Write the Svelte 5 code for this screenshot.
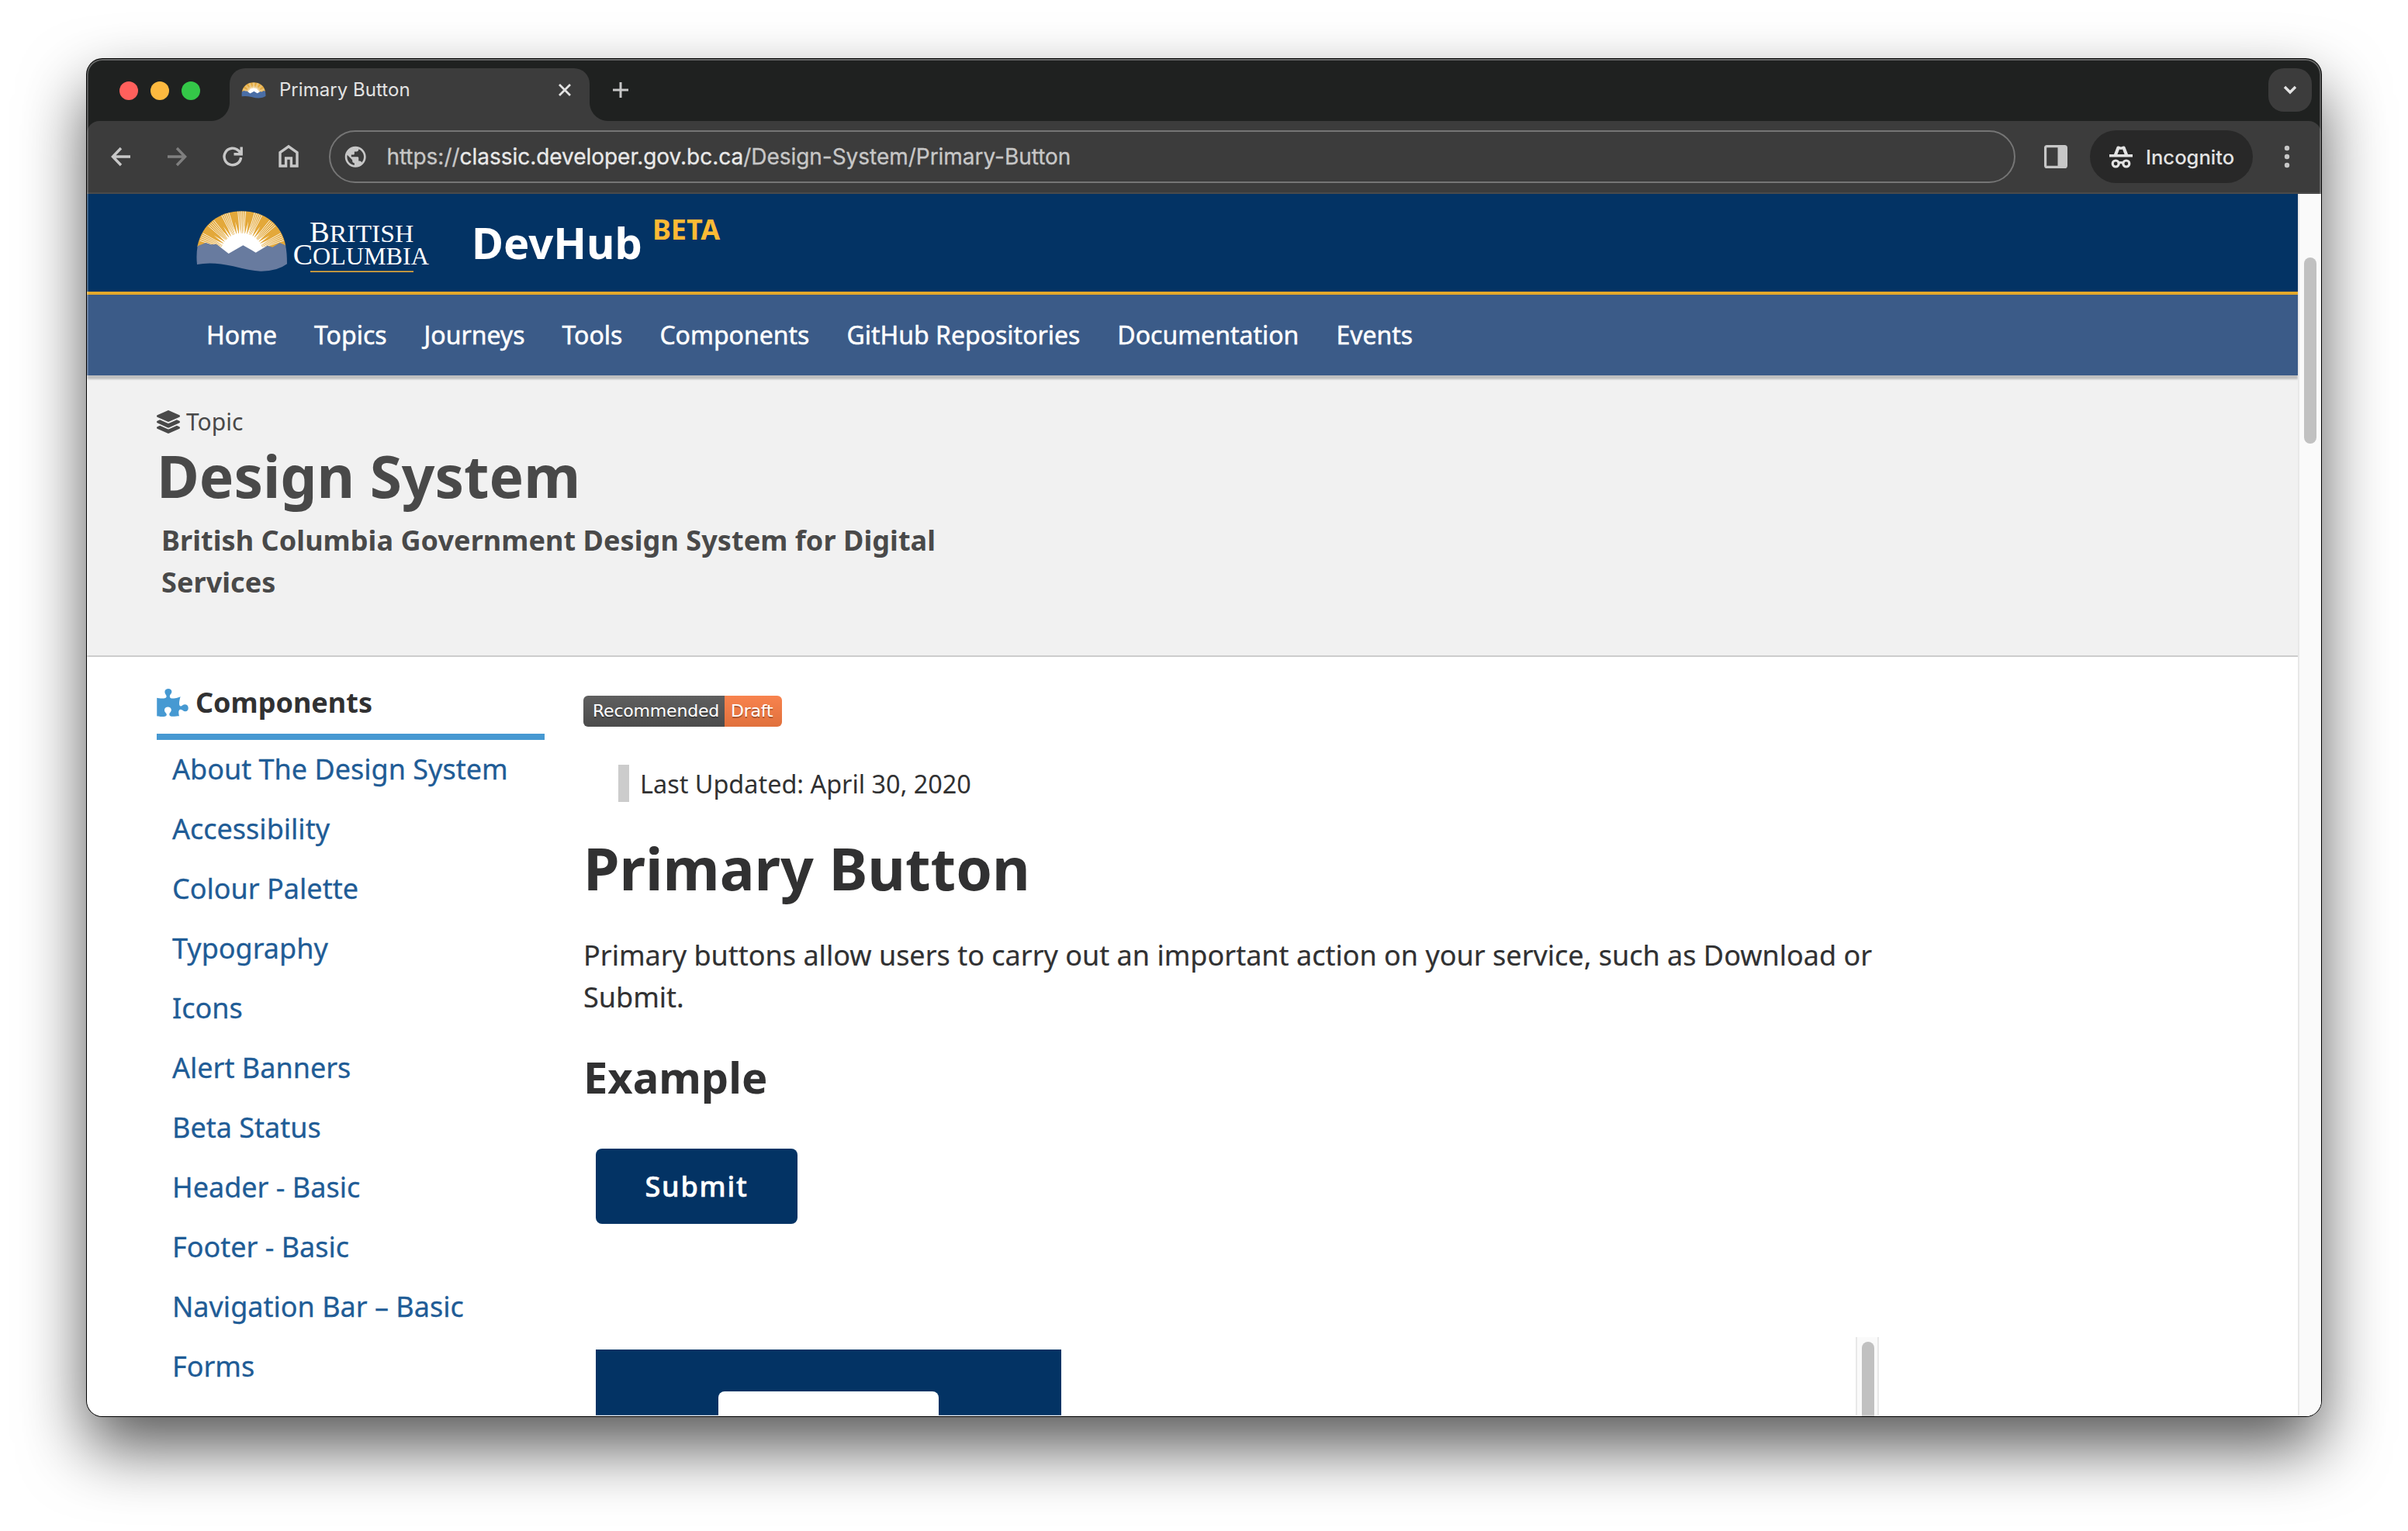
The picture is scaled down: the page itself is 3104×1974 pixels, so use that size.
<script lang="ts">
  const navItems = ['Home', 'Topics', 'Journeys', 'Tools', 'Components', 'GitHub Repositories', 'Documentation', 'Events'];
  const links = [
    'About The Design System', 'Accessibility', 'Colour Palette', 'Typography', 'Icons', 'Alert Banners',
    'Beta Status', 'Header - Basic', 'Footer - Basic', 'Navigation Bar – Basic', 'Forms'
  ];

  // Sun rays radiate from the centre of the dome
  const cx = 203;
  const cy = 200;
  const at = (deg: number, r: number) => {
    const a = (deg * Math.PI) / 180;
    return `${(cx + Math.sin(a) * r).toFixed(1)} ${(cy - Math.cos(a) * r).toFixed(1)}`;
  };
  const wedge = (deg: number, half: number, r0: number, r1: number) =>
    `M${at(deg - half, r0)}L${at(deg, r1)}L${at(deg + half, r0)}Z`;
  const bundles = [-66, -44, -22, 0, 22, 44, 66];
  const thin = bundles.flatMap((b) => [-5, -2.5, 0, 2.5, 5].map((d) => `M${at(b + d, 70)}L${at(b + d, 172)}`)).join('');
  const spikes = [-77, -55, -33, -11, 11, 33, 55, 77]
    .flatMap((b) => [wedge(b, 3, 76, 132), wedge(b - 5.5, 3, 76, 116), wedge(b + 5.5, 3, 76, 116)])
    .join('');
</script>

{#snippet sun(blue: string)}
  <path d="M31 168C48 82 115 31 203 31S358 82 373 166L350 190H60Z" fill="#e3a83a" />
  <g clip-path="url(#dome)">
    <circle cx={cx} cy={cy} r="84" fill="#fff" />
    <path d={spikes} fill="#fff" />
    <path d={thin} stroke="#fff" stroke-width="2.6" fill="none" />
  </g>
  <path d="M32 166L64 153L84 160L105 158L152 195L208 163L240 181L257 191L302 164L322 170L350 153L372 163Q378 190 378 235Q340 264 275 263Q235 261 170 244Q90 225 30 237Q26 200 32 166Z" fill={blue} />
{/snippet}

<div class="desktop">
  <div class="window">
    <header class="tabstrip">
      <div class="lights"><i class="red"></i><i class="amber"></i><i class="green"></i></div>
      <div class="tab">
        <svg class="favicon" viewBox="22 28 362 240" preserveAspectRatio="none">{@render sun('#4a6ea6')}</svg>
        <span class="tab-title">Primary Button</span>
        <svg class="close" viewBox="0 0 20 20"><path d="M3 3L17 17M17 3L3 17" /></svg>
      </div>
      <svg class="plus" viewBox="0 0 24 24"><path d="M12 2V22M2 12H22" /></svg>
      <div class="tabsearch"><svg viewBox="0 0 20 14"><path d="M3 3L10 10L17 3" /></svg></div>
    </header>

    <div class="strip-base">
      <div class="toolbar">
        <svg class="tool" viewBox="0 0 36 36"><path d="M30 18H9M18 7L7.4 18L18 29" /></svg>
        <svg class="tool dim" viewBox="0 0 36 36"><path d="M6 18H27M18 7L28.6 18L18 29" /></svg>
        <svg class="tool" viewBox="0 0 36 36"><path d="M28.6 19A10.8 10.8 0 1 1 25.4 10.2L28 13M29.2 5.5V14.7H19.5" /></svg>
        <svg class="tool" viewBox="0 0 36 36"><path d="M7 12.6L18 4.8L29 12.6V30H21.4V20H14.6V30H7Z" /></svg>
        <div class="omnibox">
          <svg class="globe" viewBox="0 0 24 24"><path d="M12 2C6.48 2 2 6.48 2 12s4.48 10 10 10 10-4.48 10-10S17.52 2 12 2zm-1 17.93c-3.95-.49-7-3.85-7-7.93 0-.62.08-1.21.21-1.79L9 15v1c0 1.1.9 2 2 2v1.93zm6.9-2.54c-.26-.81-1-1.39-1.9-1.39h-1v-3c0-.55-.45-1-1-1H8v-2h2c.55 0 1-.45 1-1V7h2c1.1 0 2-.9 2-2v-.41c2.93 1.19 5 4.06 5 7.41 0 2.08-.8 3.97-2.1 5.39z" /></svg>
          <span class="url">https://<b>classic.developer.gov.bc.ca</b>/Design-System/Primary-Button</span>
        </div>
        <svg class="panel" viewBox="0 0 30 30"><rect x="1.6" y="1.6" width="26.8" height="26.8" rx="2" /><path d="M17.5 1.6H28.4V28.4H17.5Z" /></svg>
        <div class="incognito">
          <svg viewBox="0 0 30 29">
            <path d="M0 11H30V14.4H0ZM5.6 12L9.6 1.6Q10.2 0 12 .5L15 1.5L18 .5Q19.8 0 20.4 1.6L24.4 12Z" />
            <g fill="none" stroke="#e3e3e3" stroke-width="3.2"><circle cx="8.2" cy="23" r="4" /><circle cx="21.8" cy="23" r="4" /><path d="M12.2 22.4Q15 20.6 17.8 22.4" /></g>
            <path class="hat-inner" d="M10.4 11L13 4.4L15 5L17 4.4L19.6 11Z" />
          </svg>
          <span>Incognito</span>
        </div>
        <svg class="dots" viewBox="0 0 8 30"><circle cx="4" cy="4" r="3.2" /><circle cx="4" cy="15" r="3.2" /><circle cx="4" cy="26" r="3.2" /></svg>
      </div>
    </div>

    <div class="viewport">
      <div class="page">
        <div class="site-header">
          <svg class="logo" viewBox="0 0 960 300">
            <defs><clipPath id="dome"><path d="M31 168C48 82 115 31 203 31S358 82 373 166L373 200H31Z" /></clipPath></defs>
            {@render sun('#687b9f')}
            <g font-family="'Liberation Serif', serif" fill="#fff">
              <text x="465" y="150" font-size="111" textLength="403" lengthAdjust="spacingAndGlyphs">B<tspan font-size="97">RITISH</tspan></text>
              <text x="401" y="236" font-size="113" textLength="526" lengthAdjust="spacingAndGlyphs">C<tspan font-size="96">OLUMBIA</tspan></text>
            </g>
            <rect x="468" y="262" width="399" height="5" fill="#e3a83a" />
          </svg>
          <span class="brand">DevHub</span>
          <span class="beta">BETA</span>
        </div>
        <nav>
          {#each navItems as item}<a href="#top">{item}</a>{/each}
        </nav>
        <section class="banner">
          <div class="topic">
            <svg viewBox="0 0 512 512"><path d="M12.41 148.02l232.94 105.67c6.8 3.09 14.49 3.09 21.29 0l232.94-105.67c16.55-7.51 16.55-32.52 0-40.03L266.65 2.31a25.607 25.607 0 0 0-21.29 0L12.41 107.98c-16.55 7.51-16.55 32.53 0 40.04zm487.18 88.28l-58.09-26.33-161.64 73.27c-7.56 3.43-15.59 5.17-23.86 5.17s-16.29-1.74-23.86-5.17L70.51 209.97l-58.1 26.33c-16.55 7.5-16.55 32.5 0 40l232.94 105.59c6.8 3.08 14.49 3.08 21.29 0L499.59 276.3c16.55-7.5 16.55-32.5 0-40zm0 127.8l-57.87-26.23-161.86 73.37c-7.56 3.43-15.59 5.17-23.86 5.17s-16.29-1.74-23.86-5.17L70.29 337.87 12.41 364.1c-16.55 7.5-16.55 32.5 0 40l232.94 105.59c6.8 3.08 14.49 3.08 21.29 0L499.59 404.1c16.55-7.5 16.55-32.5 0-40z" /></svg>
            <span>Topic</span>
          </div>
          <h1 class="banner-title">Design System</h1>
          <p class="banner-sub">British Columbia Government Design System for Digital Services</p>
        </section>

        <div class="columns">
          <aside>
            <h2 class="side-title">
              <svg viewBox="0 0 576 512"><path d="M519.442 288.651c-41.519 0-59.5 31.593-82.058 31.593C377.409 320.244 432 144 432 144s-196.288 80-196.288-3.297c0-35.827 36.288-46.25 36.288-85.985C272 19.216 243.885 0 210.539 0c-34.654 0-66.366 18.891-66.366 56.346 0 41.364 31.711 59.277 31.711 81.75C175.885 207.719 0 166.758 0 166.758v333.237s178.635 41.047 178.635-28.662c0-22.473-40-40.107-40-81.471 0-37.456 29.25-56.346 63.577-56.346 33.673 0 61.788 19.216 61.788 54.717 0 39.735-36.288 50.158-36.288 85.985 0 60.803 129.675 25.73 181.23 25.73 0 0-34.725-120.101 25.827-120.101 35.962 0 46.423 36.152 86.308 36.152C556.712 416 576 387.99 576 354.443c0-34.199-18.962-65.792-56.558-65.792z" /></svg>
              <span>Components</span>
            </h2>
            <ul>
              {#each links as link}<li><a href="#top">{link}</a></li>{/each}
            </ul>
          </aside>
          <main>
            <div class="badge"><span class="status">Recommended</span><span class="state">Draft</span></div>
            <blockquote>Last Updated: April 30, 2020</blockquote>
            <h1 class="title">Primary Button</h1>
            <p class="intro">Primary buttons allow users to carry out an important action on your service, such as Download or Submit.</p>
            <h2 class="subtitle">Example</h2>
            <button class="submit">Submit</button>
            <div class="frame">
              <div class="dark-demo"><div class="light-button"></div></div>
              <div class="frame-scroll"><div class="frame-thumb"></div></div>
            </div>
          </main>
        </div>
      </div>
      <div class="scrollbar"><div class="thumb"></div></div>
    </div>
  </div>
</div>

<style>
  :global(body) { margin: 0; background: #fff; }
  * { box-sizing: border-box; }
  h1, h2, p, ul, blockquote { margin: 0; padding: 0; }
  a { text-decoration: none; color: inherit; }
  svg { display: block; flex: none; }

  .desktop { width: 3104px; height: 1974px; padding: 76px 112px; overflow: hidden; background: #fff; }
  .window {
    position: relative; width: 2880px; height: 1750px; border-radius: 20px; overflow: hidden;
    display: flex; flex-direction: column; background: #1f2120;
    font-family: 'Noto Sans', sans-serif;
    box-shadow: 0 0 0 1px #000, 0 40px 84px rgba(0, 0, 0, 0.66);
  }
  /* faint rim light drawn over the window's edge */
  .window::after {
    content: ''; position: absolute; inset: 0; border-radius: 20px; pointer-events: none;
    box-shadow: inset 0 0 0 2px rgba(255, 255, 255, 0.22), inset 0 1px 0 1px rgba(255, 255, 255, 0.12);
  }

  .tabstrip { height: 80px; flex: none; display: flex; align-items: flex-start; background: #1f2120; font-family: Inter, 'Liberation Sans', sans-serif; }
  .lights { display: flex; gap: 16px; padding: 29px 0 0 42px; width: 184px; flex: none; }
  .lights i { width: 24px; height: 24px; border-radius: 50%; flex: none; }
  .red { background: #ff605c; }
  .amber { background: #fdb93f; }
  .green { background: #34c748; }
  .tab {
    position: relative; width: 464px; height: 68px; margin-top: 12px; padding: 0 22px 12px 15px; flex: none;
    display: flex; align-items: center; background: #3c3c3c; border-radius: 20px 20px 0 0;
  }
  .tab::before, .tab::after { content: ''; position: absolute; bottom: 0; width: 24px; height: 24px; }
  .tab::before { left: -24px; background: radial-gradient(circle at 0 0, transparent 23.5px, #3c3c3c 24.5px); }
  .tab::after { right: -24px; background: radial-gradient(circle at 100% 0, transparent 23.5px, #3c3c3c 24.5px); }
  .favicon { width: 32px; height: 21px; }
  .tab-title { margin-left: 17px; font-size: 24px; line-height: 56px; color: #e3e3e3; flex: 1; letter-spacing: 0.04px; }
  .close { width: 20px; height: 20px; }
  .close path { stroke: #e3e3e3; stroke-width: 2.8; fill: none; }
  .plus { width: 24px; height: 24px; margin: 28px 0 0 28px; }
  .plus path { stroke: #c7c7c7; stroke-width: 3; fill: none; }
  .tabsearch { width: 56px; height: 56px; margin: 12px 12px 0 auto; border-radius: 20px; background: #3c3c3c; display: grid; place-items: center; }
  .tabsearch svg { width: 20px; height: 14px; }
  .tabsearch path { stroke: #e3e3e3; stroke-width: 3.4; fill: none; }

  .strip-base { background: #1f2120; flex: none; }
  .toolbar {
    height: 94px; border-bottom: 2px solid #4a4a4a; border-radius: 16px 16px 0 0; background: #3c3c3c;
    display: flex; align-items: center; padding-left: 26px; font-family: Inter, 'Liberation Sans', sans-serif;
  }
  .tool { width: 36px; height: 36px; margin-right: 36px; }
  .tool path { stroke: #c7c7c7; stroke-width: 3.4; fill: none; }
  .tool.dim path { stroke: #7f7f7f; }
  .omnibox { width: 2174px; height: 68px; margin-left: -2px; border: 2px solid #757575; border-radius: 34px; display: flex; align-items: center; padding-left: 16px; flex: none; }
  .globe { width: 32.4px; height: 32.4px; fill: #c7c7c7; }
  .url { margin-left: 24px; font-size: 28px; color: #c7c7c7; white-space: nowrap; letter-spacing: -0.03px; -webkit-text-stroke: 0.3px; }
  .url b { font-weight: 400; color: #e9e9e9; }
  .panel { width: 30px; height: 30px; margin-left: 37px; }
  .panel rect { fill: none; stroke: #c7c7c7; stroke-width: 3.2; }
  .panel path { fill: #c7c7c7; }
  .incognito { width: 210px; height: 68px; margin-left: 29px; padding-left: 25px; border-radius: 34px; background: #282828; display: flex; align-items: center; gap: 17px; flex: none; font-size: 25.6px; font-weight: 500; color: #e3e3e3; }
  .incognito svg { width: 30px; height: 29px; fill: #e3e3e3; }
  .hat-inner { fill: #282828; }
  .dots { width: 8px; height: 30px; margin-left: 40px; fill: #c7c7c7; }

  .viewport { flex: 1; display: flex; min-height: 0; background: #fff; }
  .page { width: 2850px; flex: none; overflow: hidden; color: #313132; }
  .scrollbar { width: 30px; border-left: 2px solid #e8e8e8; background: #fafafa; padding: 82px 0 0 6px; }
  .thumb { width: 16px; height: 240px; border-radius: 8px; background: #c1c1c1; }

  .site-header { height: 130px; border-bottom: 4px solid #e3a82b; background: #033364; display: flex; align-items: flex-start; padding-left: 132px; color: #fff; }
  .logo { width: 320px; height: 100px; margin-top: 12px; }
  .brand { margin-left: 44px; font-size: 56px; font-weight: 700; line-height: 125px; }
  .beta { margin-left: 13px; font-size: 36px; font-weight: 700; line-height: 92px; color: #fcba35; }

  nav { position: relative; height: 104px; background: #3b5b88; display: flex; align-items: center; gap: 48px; padding-left: 154px; color: #fff; font-size: 32px; line-height: 40px; white-space: nowrap; box-shadow: 0 5px 2px #bfbfbf; -webkit-text-stroke: 0.5px; }

  .banner { height: 363px; padding: 40px 90px 0; border-bottom: 2px solid #ccc; background: #f1f1f1; color: #494949; }
  .topic { display: flex; align-items: center; gap: 8px; height: 40px; font-size: 30px; line-height: 40px; }
  .topic svg { width: 30px; height: 30px; fill: #494949; }
  .banner-title { margin-top: 4px; font-size: 74.8px; line-height: 90px; font-weight: 700; }
  .banner-sub { width: 1060px; margin-top: 12px; padding-left: 6px; font-size: 36px; line-height: 54px; font-weight: 700; letter-spacing: 0.07px; }

  .columns { display: flex; padding-left: 90px; gap: 50px; height: 979px; }
  aside { width: 500px; flex: none; padding-top: 32px; }
  .side-title { display: flex; align-items: center; gap: 9px; height: 75px; padding-bottom: 13px; border-bottom: 8px solid #4699d2; font-size: 36px; line-height: 54px; }
  .side-title svg { width: 41px; height: 36px; fill: #4699d2; }
  ul { list-style: none; margin-top: -1px; padding-left: 20px; color: #1f5c96; font-size: 36px; line-height: 77px; -webkit-text-stroke: 0.3px; }
  li { height: 77px; }

  main { width: 1670px; flex: none; padding-top: 50px; }
  .badge { display: flex; width: 256px; height: 40px; border-radius: 6px; overflow: hidden; font: 22px/40px 'DejaVu Sans', sans-serif; letter-spacing: -0.2px; color: #fff; text-shadow: 0 2px 0 rgba(1, 1, 1, 0.3); white-space: nowrap; }
  .status { width: 182px; padding-left: 12px; background: linear-gradient(#5f5f5f, #4b4b4b); }
  .state { flex: 1; padding-left: 8px; background: linear-gradient(#f8834e, #e0703c); }
  blockquote { margin: 49px 0 0 45px; height: 48px; border-left: 14px solid #ccc; padding-left: 14px; font-size: 32.4px; line-height: 48px; }
  .title { margin-top: 40px; font-size: 75px; line-height: 90px; }
  .intro { margin-top: 41px; font-size: 36px; line-height: 54px; -webkit-text-stroke: 0.2px; }
  .subtitle { margin-top: 40px; font-size: 56px; line-height: 70px; }
  .submit { display: block; width: 260px; height: 97px; margin: 58px 0 0 16px; padding: 0; border: 0; border-radius: 8px; background: #033364; color: #fff; font: 500 36px/97px 'Noto Sans', sans-serif; letter-spacing: 1.8px; -webkit-text-stroke: 0.6px; }
  .frame { height: 101px; margin-top: 146px; display: flex; justify-content: space-between; }
  .dark-demo { width: 600px; margin: 16px 0 0 16px; background: #033364; padding: 54px 0 0 158px; }
  .light-button { width: 284px; height: 60px; border-radius: 8px 8px 0 0; background: #fff; }
  .frame-scroll { width: 30px; border: solid #e8e8e8; border-width: 0 2px; background: #fafafa; padding: 6px 0 0 6px; }
  .frame-thumb { width: 16px; height: 100px; border-radius: 8px 8px 0 0; background: #c1c1c1; }
</style>
